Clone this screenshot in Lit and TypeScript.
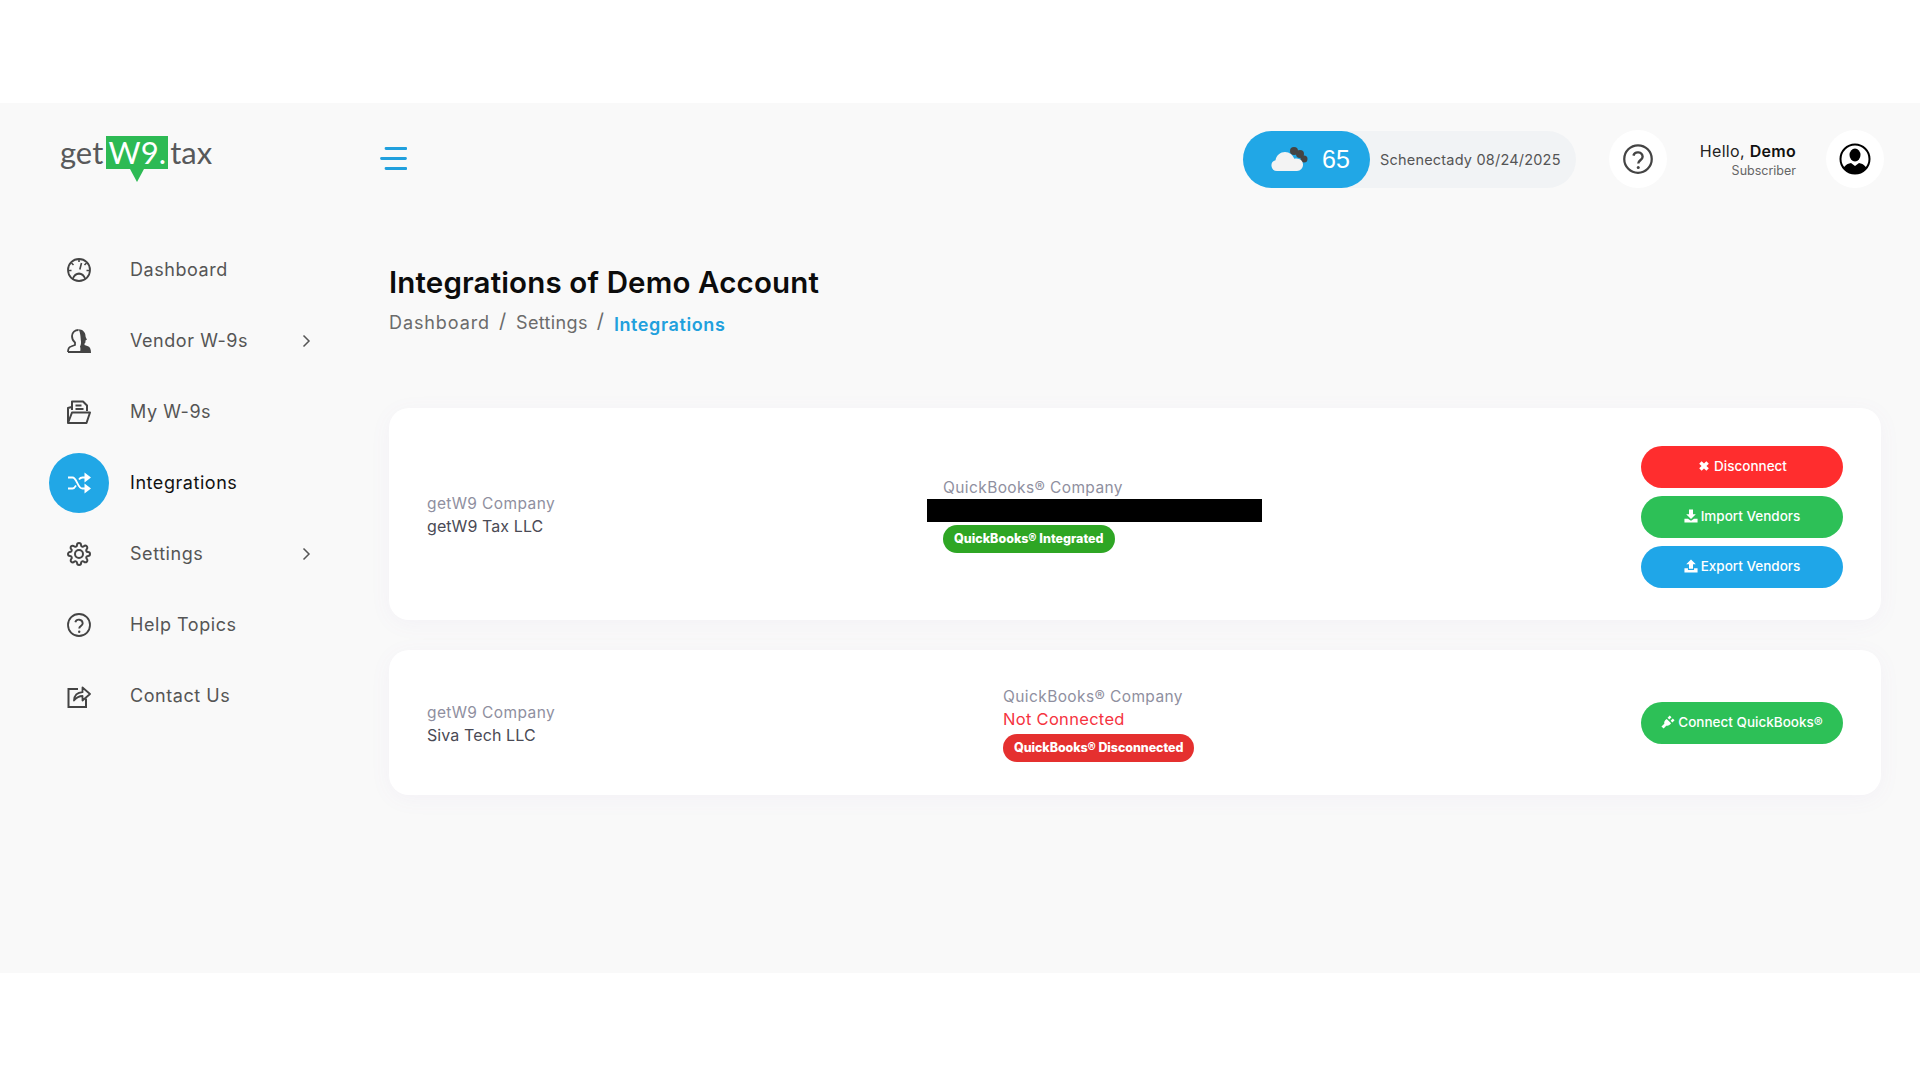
import { LitElement, css, html, svg } from 'lit'
import { customElement } from 'lit/decorators.js'

const navIcons = {
  gauge: svg`<circle cx="12" cy="12" r="11" fill="none" stroke-width="1.800"/><path fill="none" stroke-width="1.600" d="M12 1.500v2.500M4.500 5l2 2M19.500 5l-2 2M1.500 12.500h3M19.500 12.500h3M14.500 5 12.800 11.500"/><path stroke="none" d="M5 20.500c1.200-3.800 3.800-6 7-6s5.800 2.200 7 6l-1.500 1c-1-2.800-3-4.800-5.500-4.800s-4.500 2-5.500 4.800z"/>`,
  vendor: svg`<path fill="none" stroke-width="1.800" d="M1 23h14M1 23c0-3 1-5 3-5.500l4-1.500v-2.500C6 12 5 10 5 7c0-3.500 3-6 6.500-6"/><path stroke="none" d="M11.500.2C15.500.2 18.500 3 18.500 7c0 1 .5 2 1.500 3.500l-1.500 1c0 1.500 0 2.500-1 3v1.500l3.500 1.200c2 .7 3 2.800 3 6.800H12.500c1.200-2 1.200-4.500.5-6.500 1.200-2 1.200-4.500.8-6.500C13.500 5.500 13 3 11.500.2z"/>`,
  doc: svg`<path fill="none" stroke-width="2" stroke-linejoin="round" d="M1 23V8l3.500-1M5 10V1.500h11l4 4V11M8.500 5.500h6M8.500 9h8M1 23l4-10.500h18L19.500 23z"/>`,
  shuffle: svg`<path fill="none" stroke-width="1.800" d="M1 6.500h4.500c4.500 0 5 11 10 11H19M1 17.500h4.500c1.500 0 2.500-1.300 3.500-3M12 8.500c.8-1.200 1.900-2 3.500-2H19"/><path stroke="none" d="M17.500 1.500 24 6.500l-6.500 5zM17.500 12.500l6.500 5-6.500 5z"/>`,
  gear: svg`<circle cx="12" cy="12" r="4" fill="none" stroke-width="2"/><path fill="none" stroke-width="2" d="M19.400 15a1.650 1.650 0 0 0 .33 1.820l.06.06a2 2 0 0 1 0 2.830 2 2 0 0 1-2.830 0l-.06-.06a1.650 1.650 0 0 0-1.820-.33 1.650 1.650 0 0 0-1 1.510V21a2 2 0 0 1-2 2 2 2 0 0 1-2-2v-.09A1.650 1.650 0 0 0 9 19.400a1.650 1.650 0 0 0-1.820.33l-.06.06a2 2 0 0 1-2.830 0 2 2 0 0 1 0-2.830l.06-.06a1.650 1.650 0 0 0 .33-1.820 1.650 1.650 0 0 0-1.510-1H3a2 2 0 0 1-2-2 2 2 0 0 1 2-2h.09A1.650 1.650 0 0 0 4.600 9a1.650 1.650 0 0 0-.33-1.820l-.06-.06a2 2 0 0 1 0-2.830 2 2 0 0 1 2.830 0l.06.06a1.650 1.650 0 0 0 1.820.33H9a1.650 1.650 0 0 0 1-1.510V3a2 2 0 0 1 2-2 2 2 0 0 1 2 2v.09a1.650 1.650 0 0 0 1 1.510 1.650 1.650 0 0 0 1.820-.33l.06-.06a2 2 0 0 1 2.830 0 2 2 0 0 1 0 2.830l-.06.06a1.650 1.650 0 0 0-.33 1.820V9a1.650 1.650 0 0 0 1.510 1H21a2 2 0 0 1 2 2 2 2 0 0 1-2 2h-.09a1.650 1.650 0 0 0-1.510 1z"/>`,
  help: svg`<circle cx="12" cy="12" r="11" fill="none" stroke-width="1.800"/><path fill="none" stroke-width="1.900" d="M8.300 9.300a3.800 3.800 0 0 1 7.400.9c0 2.600-3.500 3-3.500 5.300"/><circle cx="12.200" cy="18.700" r="1.200" stroke="none"/>`,
  contact: svg`<path fill="none" stroke-width="2" d="M11 5H1.500v18H19v-8.500"/><path fill="none" stroke-width="1.800" stroke-linejoin="round" d="M7 16.500c.3-5 3.500-8 8.500-8.300V3.500l7.500 6.500-7.500 6.500V12c-3.500 0-6 1.500-8.500 4.500z"/>`,
}

const navItems = [
  { label: 'Dashboard', icon: navIcons.gauge },
  { label: 'Vendor W-9s', icon: navIcons.vendor, more: true },
  { label: 'My W-9s', icon: navIcons.doc },
  { label: 'Integrations', icon: navIcons.shuffle, active: true },
  { label: 'Settings', icon: navIcons.gear, more: true },
  { label: 'Help Topics', icon: navIcons.help },
  { label: 'Contact Us', icon: navIcons.contact },
]

const btnIcons = {
  times: svg`<path d="M2.500 5.300 5.300 2.500 8 5.200l2.700-2.700 2.800 2.800L10.800 8l2.700 2.700-2.800 2.800L8 10.800l-2.700 2.700-2.800-2.800L5.200 8z"/>`,
  download: svg`<path d="M5.700.5h4.600v5.500h3.200L8 11.500 2.500 6h3.200zM.5 11h4L8 13.500 11.500 11h4v4.500H.5z"/>`,
  upload: svg`<path d="M8 .5 13.500 6h-3.200v5H5.700V6H2.500zM.5 10.500h4v2h7v-2h4v5H.5z"/>`,
  plug: svg`<path d="M6.500 4.500l5 5c-1.300 2.300-3.500 3.300-5.500 2.700L3 15.500l-2.500-2.500 3.300-3C3.200 8 4.200 5.800 6.500 4.500zM10 .5l2 2L9.500 5 7.500 3zM13.500 4l2 2L13 8.500l-2-2z"/>`,
}

@customElement('app-root')
export class AppRoot extends LitElement {
  static styles = css`
    :host {
      display: block;
      height: 1080px;
      padding-top: 103px;
      box-sizing: border-box;
      background: #fff;
      font-family: Inter, 'Noto Sans', sans-serif;
    }
    .shell {
      height: 870px;
      background: #f9f9f9;
    }

    /* header */
    header {
      display: flex;
      align-items: center;
      height: 110px;
      box-sizing: border-box;
      padding: 2px 36px 0 60px;
    }
    .logo {
      display: flex;
      align-items: center;
      width: 320px;
      font-family: Lato, sans-serif;
      font-size: 31px;
      color: #58595b;
      margin-top: -14px;
    }
    .logo-mark {
      position: relative;
      margin: 0 2px 0 3px;
      height: 33px;
      width: 62px;
      background: #2dba54;
      color: #fff;
      line-height: 33px;
      text-align: center;
    }
    .logo-mark::after {
      content: '';
      position: absolute;
      left: 24px;
      top: 33px;
      border: 7px solid transparent;
      border-top: 13px solid #2dba54;
      border-bottom: 0;
    }
    .burger {
      display: block;
      width: 27px;
      height: 23px;
      margin-top: -2px;
    }
    .weather {
      display: flex;
      align-items: center;
      margin-left: auto;
      width: 333px;
      height: 57px;
      border-radius: 29px;
      background: #f1f3f5;
    }
    .temp {
      display: flex;
      align-items: center;
      gap: 13px;
      width: 127px;
      height: 57px;
      box-sizing: border-box;
      padding-left: 28px;
      border-radius: 29px;
      background: #21a7e6;
      color: #fff;
      font-family: 'Liberation Sans', sans-serif;
      font-size: 25px;
    }
    .place {
      margin-left: 10px;
      font-size: 14.500px;
      letter-spacing: 0.2px;
      color: #555;
      white-space: nowrap;
    }
    .round {
      display: flex;
      align-items: center;
      justify-content: center;
      width: 58px;
      height: 58px;
      border-radius: 50%;
      background: #fff;
    }
    .help {
      margin-left: 33px;
    }
    .user {
      margin: 4px 0 0 32px;
      width: 97px;
      text-align: right;
      white-space: nowrap;
    }
    .hello {
      font-size: 16px;
      letter-spacing: 0.3px;
      color: #222;
      line-height: 20px;
    }
    .hello b {
      font-weight: 600;
      color: #111;
    }
    .role {
      font-size: 12.500px;
      color: #666;
      line-height: 20px;
    }
    .avatar {
      margin-left: 30px;
    }

    /* sidebar */
    .body {
      display: flex;
    }
    nav {
      width: 389px;
      flex: none;
      padding-top: 21px;
    }
    .item {
      position: relative;
      display: flex;
      align-items: center;
      height: 71px;
      padding-left: 67px;
      font-size: 18px;
      letter-spacing: 0.55px;
      color: #555;
    }
    .item svg.icon {
      width: 24px;
      height: 24px;
      fill: #444;
      stroke: #444;
      margin-right: 39px;
    }
    .item span {
      position: relative;
    }
    .item.active {
      color: #111;
    }
    .item.active::before {
      content: '';
      position: absolute;
      left: 49px;
      top: 6px;
      width: 60px;
      height: 60px;
      border-radius: 50%;
      background: #21a7e6;
    }
    .item.active svg.icon {
      position: relative;
      fill: #fff;
      stroke: #fff;
    }
    .chevron {
      position: absolute;
      left: 302px;
      top: 29px;
      width: 9px;
      height: 14px;
    }

    /* main */
    main {
      flex: 1;
      padding: 48px 39px 0 0;
    }
    h1 {
      margin: 0;
      font-size: 29.500px;
      letter-spacing: 0.15px;
      font-weight: 600;
      line-height: 42px;
      color: #0c0c0c;
    }
    .crumbs {
      display: flex;
      align-items: center;
      margin-top: 6px;
      height: 26px;
      font-size: 18px;
      letter-spacing: 0.9px;
      color: #6b6b6b;
    }
    .crumbs i {
      font-style: normal;
      margin: 0 9px;
      font-size: 20px;
      margin-top: -3px;
    }
    .crumbs .mid {
      letter-spacing: 0.35px;
    }
    .crumbs .now {
      color: #21a0dd;
      font-weight: 600;
      letter-spacing: 0.6px;
      margin-top: 4px;
    }
    .card {
      display: grid;
      grid-template-columns: 516px 1fr 202px;
      align-items: center;
      margin-bottom: 30px;
      padding: 0 38px;
      border-radius: 20px;
      background: #fff;
      box-shadow: 0 4px 22px rgba(130, 100, 190, 0.05);
    }
    .card.linked {
      height: 212px;
      margin-top: 73px;
    }
    .card.unlinked {
      height: 145px;
      grid-template-columns: 576px 1fr 202px;
    }
    .company {
      margin-top: 2px;
    }
    .unlinked .account {
      margin-top: 2px;
    }
    .label {
      font-size: 15.500px;
      letter-spacing: 0.4px;
      line-height: 23px;
      color: #8f8fa0;
      white-space: nowrap;
    }
    .value {
      font-size: 16px;
      letter-spacing: 0.1px;
      line-height: 23px;
      color: #4a4a55;
      white-space: nowrap;
    }
    .value.off {
      font-size: 16.500px;
      letter-spacing: 0.3px;
      color: #f5333f;
    }
    .redact {
      width: 335px;
      height: 23px;
      margin-left: -16px;
      background: #000;
    }
    .badge {
      display: inline-block;
      height: 28px;
      line-height: 28px;
      padding: 0 11px;
      margin-top: 3px;
      border-radius: 14px;
      color: #fff;
      font-size: 12.500px;
      font-weight: 800;
      white-space: nowrap;
    }
    .badge.ok {
      background: #2ea624;
    }
    .badge.bad {
      background: #e5302f;
      letter-spacing: -0.08px;
    }
    .actions {
      display: flex;
      flex-direction: column;
      gap: 8px;
    }
    .linked .actions {
      margin-top: 6px;
    }
    .btn {
      display: flex;
      align-items: center;
      justify-content: center;
      gap: 3px;
      height: 42px;
      box-sizing: border-box;
      padding-bottom: 2px;
      border-radius: 21px;
      color: #fff;
      font-size: 13.500px;
      font-weight: 500;
      white-space: nowrap;
    }
    .btn svg {
      width: 14px;
      height: 14px;
      fill: #fff;
    }
    .btn.red {
      background: #ff2d2e;
    }
    .btn.green {
      background: #2dc057;
    }
    .btn.blue {
      background: #1fa6e8;
    }
  `

  private button(color: string, icon: unknown, label: string) {
    return html`<div class="btn ${color}">
      <svg viewBox="0 0 16 16">${icon}</svg>${label}
    </div>`
  }

  render() {
    return html`
      <div class="shell">
        <header>
          <div class="logo">get<span class="logo-mark">W9.</span>tax</div>
          <svg class="burger" viewBox="0 0 27 23" fill="none" stroke="#21a0dd" stroke-width="2.800" stroke-linecap="round">
            <path d="M6 1.500h20M1.500 11.500h24M6 21.500h20" />
          </svg>
          <div class="weather">
            <div class="temp">
              <svg width="38" height="26" viewBox="0 0 38 26">
                <circle cx="23" cy="5" r="4" fill="#444" />
                <circle cx="29" cy="8" r="4" fill="#444" />
                <circle cx="33" cy="13" r="3.500" fill="#444" />
                <path fill="#f3f3f3" d="M6 25a5.500 5.500 0 0 1-1.500-10.800C5.500 9 9.500 6 14 6c4.500 0 8 3 9.300 6.800 .8-.3 1.500-.4 2.200-.4a6.300 6.300 0 0 1 .5 12.600z" />
              </svg>
              65
            </div>
            <div class="place">Schenectady 08/24/2025</div>
          </div>
          <div class="round help">
            <svg width="30" height="30" viewBox="0 0 24 24" fill="#444" stroke="#444">${navIcons.help}</svg>
          </div>
          <div class="user">
            <div class="hello">Hello, <b>Demo</b></div>
            <div class="role">Subscriber</div>
          </div>
          <div class="round avatar">
            <svg width="32" height="32" viewBox="0 0 32 32">
              <defs>
                <clipPath id="av"><circle cx="16" cy="16" r="14.500" /></clipPath>
              </defs>
              <circle cx="16" cy="16" r="14.500" fill="#fff" stroke="#000" stroke-width="2" />
              <g clip-path="url(#av)">
                <ellipse cx="16" cy="12" rx="5.500" ry="6.500" />
                <path d="M3 32c0-8 4-11 9-12l4 3 4-3c5 1 9 4 9 12z" />
              </g>
            </svg>
          </div>
        </header>
        <div class="body">
          <nav>
            ${navItems.map(
              (item) => html`
                <div class="item ${item.active ? 'active' : ''}">
                  <svg class="icon" viewBox="0 0 24 24">${item.icon}</svg>
                  <span>${item.label}</span>
                  ${item.more
                    ? html`<svg class="chevron" viewBox="0 0 9 14" fill="none" stroke="#555" stroke-width="1.500"><path d="M1.500 1.500 7 7l-5.500 5.500" /></svg>`
                    : null}
                </div>
              `,
            )}
          </nav>
          <main>
            <h1>Integrations of Demo Account</h1>
            <div class="crumbs">
              <span>Dashboard</span><i>/</i><span class="mid">Settings</span><i>/</i><span class="now">Integrations</span>
            </div>
            <section class="card linked">
              <div class="company">
                <div class="label">getW9 Company</div>
                <div class="value">getW9 Tax LLC</div>
              </div>
              <div class="account">
                <div class="label">QuickBooks® Company</div>
                <div class="redact"></div>
                <span class="badge ok">QuickBooks® Integrated</span>
              </div>
              <div class="actions">
                ${this.button('red', btnIcons.times, 'Disconnect')}
                ${this.button('green', btnIcons.download, 'Import Vendors')}
                ${this.button('blue', btnIcons.upload, 'Export Vendors')}
              </div>
            </section>
            <section class="card unlinked">
              <div class="company">
                <div class="label">getW9 Company</div>
                <div class="value">Siva Tech LLC</div>
              </div>
              <div class="account">
                <div class="label">QuickBooks® Company</div>
                <div class="value off">Not Connected</div>
                <span class="badge bad">QuickBooks® Disconnected</span>
              </div>
              <div class="actions">${this.button('green', btnIcons.plug, 'Connect QuickBooks®')}</div>
            </section>
          </main>
        </div>
      </div>
    `
  }
}
